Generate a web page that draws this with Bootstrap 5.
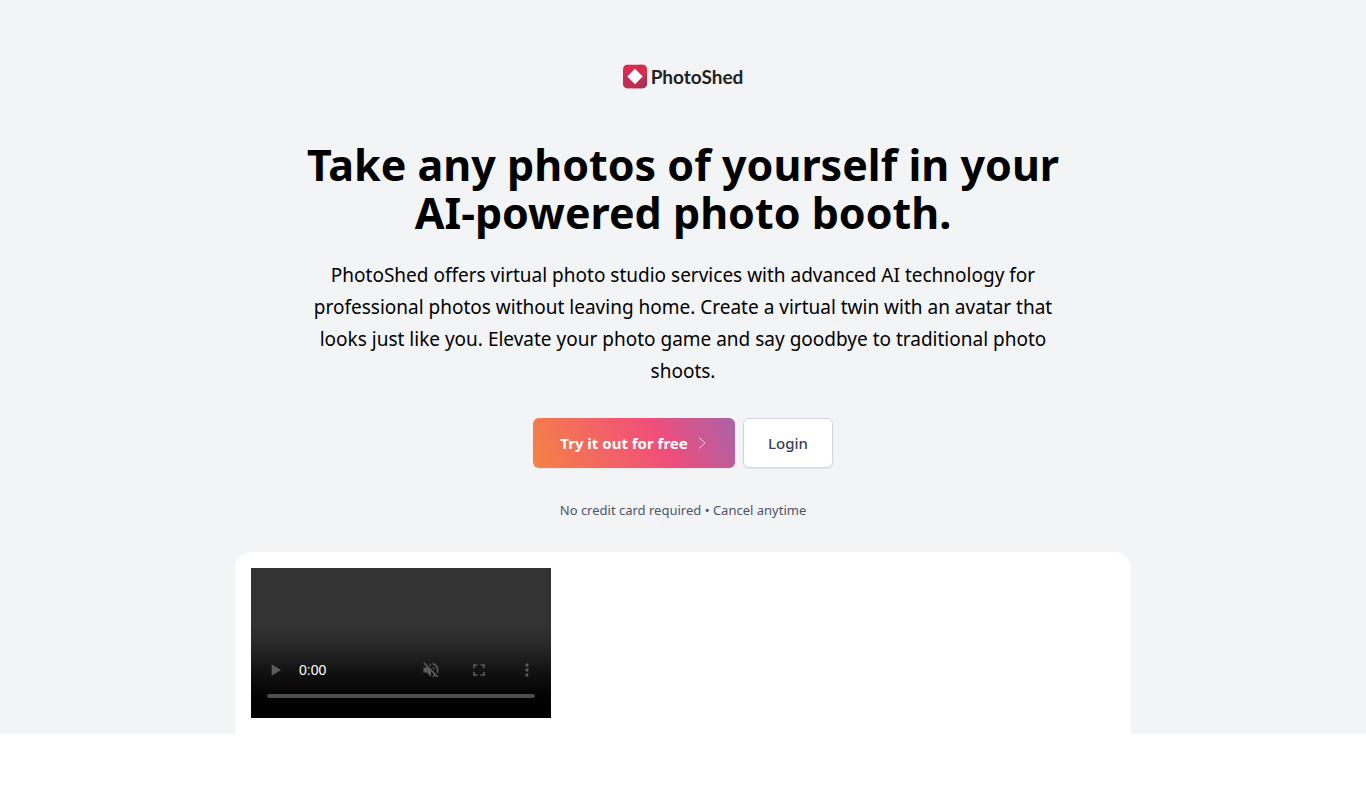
<!DOCTYPE html>
<html lang="en">
<head>
<meta charset="utf-8">
<meta name="viewport" content="width=device-width, initial-scale=1">
<title>PhotoShed</title>
<link href="https://cdn.jsdelivr.net/npm/bootstrap@5.3.0/dist/css/bootstrap.min.css" rel="stylesheet">
<style>
body { font-family: "Noto Sans", "Open Sans", sans-serif; color: #000; background: #fff; }
.hero { background: #f3f4f6; padding-top: 64px; }
.hero-copy { max-width: 768px; }
.brand { color: #1f2223; font: 700 19px/25px Lato, sans-serif; gap: 4px; }
.hero-title { font-size: 43px; line-height: 48px; font-weight: 700; margin: 52px 0 22px; }
.hero-lead { font-size: 19px; line-height: 32px; margin-bottom: 31px; }
.btn-hero { height: 50px; border-radius: 6px; font-size: 15px; line-height: 24px; padding: 0 24px; box-shadow: 0 1px 2px rgba(0,0,0,.06); }
.btn-try { --bs-btn-color: #fff; --bs-btn-hover-color: #fff; --bs-btn-active-color: #fff; border: 0; font-weight: 700; background: linear-gradient(65deg, #f58345 0%, #f04e7b 62%, #a962a8 100%); width: 202px; }
.btn-login { --bs-btn-color: #374151; --bs-btn-bg: #fff; --bs-btn-border-color: #d1d5db; --bs-btn-hover-bg: #f9fafb; --bs-btn-hover-border-color: #d1d5db; --bs-btn-hover-color: #374151; font-weight: 500; width: 90px; padding: 0; }
.hero-note { font-size: 13px; line-height: 20px; color: #4b5563; margin: 32px 0; }
.demo { max-width: 896px; border-radius: 16px 16px 0 0; }
.player { width: 300px; max-width: 100%; height: 150px; background: linear-gradient(#333 0, #333 36%, #2b2b2b 49%, #121212 69%, #030303 85%, #000 100%); }
.player-controls { height: 48px; }
.player-controls .btn { --bs-btn-disabled-color: #5b5b5b; --bs-btn-disabled-opacity: 1; width: 48px; height: 48px; }
.player-time { font: 14px/20px "Liberation Sans", sans-serif; }
.seek { appearance: none; -webkit-appearance: none; display: block; width: calc(100% - 32px); height: 4px; margin: 0 16px 20px; border-radius: 2px; background: #4d4d4d; }
.seek::-webkit-slider-thumb { -webkit-appearance: none; width: 0; height: 0; }
</style>
</head>
<body>
<main class="hero px-3">
  <div class="hero-copy mx-auto text-center">
    <a href="#" class="brand d-inline-flex align-items-center text-decoration-none align-top">
      <svg width="24" height="25" viewBox="0 0 25 25" aria-hidden="true">
        <defs>
          <linearGradient id="tile" x1="0" y1="0" x2="1" y2="1"><stop offset="0" stop-color="#f0284b"/><stop offset="1" stop-color="#93345c"/></linearGradient>
          <linearGradient id="fold" x1="0" y1="0" x2="1" y2="0"><stop offset="0" stop-color="#b52d55"/><stop offset="1" stop-color="#e42a4e"/></linearGradient>
          <clipPath id="tile-shape"><rect width="25" height="25" rx="5"/></clipPath>
        </defs>
        <g clip-path="url(#tile-shape)">
          <path fill="#dd2b50" d="M0 0h25v25H0z"/>
          <path fill="url(#fold)" d="M9 8 17 0h8v13l-4-.5-8.500-8.500z"/>
          <path fill="url(#tile)" d="M21 12.500 25 9v16H10l-2-4z"/>
          <path fill="#c12d54" d="M0 12h4l8.500 8.500L8 25H0z"/>
        </g>
        <path fill="#fff" d="M12.500 4.500 20.500 12.500 12.500 20.500 4.500 12.500z"/>
      </svg>
      <span>PhotoShed</span>
    </a>
    <h1 class="hero-title">Take any photos of yourself in your AI-powered photo booth.</h1>
    <p class="hero-lead">PhotoShed offers virtual photo studio services with advanced AI technology for professional photos without leaving home. Create a virtual twin with an avatar that looks just like you. Elevate your photo game and say goodbye to traditional photo shoots.</p>
    <div class="d-flex flex-wrap justify-content-center gap-2">
      <button type="button" class="btn btn-hero btn-try d-inline-flex align-items-center justify-content-center gap-2">Try it out for free
        <svg width="12" height="12" viewBox="0 0 12 12" fill="none" stroke="#fff" stroke-opacity=".75" aria-hidden="true"><path d="M3 .5 9 6l-6 5.500"/></svg>
      </button>
      <button type="button" class="btn btn-hero btn-login">Login</button>
    </div>
    <p class="hero-note">No credit card required • Cancel anytime</p>
  </div>
  <section class="demo bg-white mx-auto p-3" aria-label="Demo video">
    <div class="player d-flex flex-column justify-content-end">
      <div class="player-controls d-flex align-items-center">
        <button type="button" class="btn p-0 border-0 d-flex align-items-center justify-content-center" aria-label="Play" disabled>
          <svg width="20" height="20" viewBox="0 0 24 24" fill="currentColor"><path d="M8 5v14l11-7z"/></svg>
        </button>
        <span class="player-time text-white">0:00</span>
        <button type="button" class="btn p-0 border-0 ms-auto d-flex align-items-center justify-content-center" aria-label="Unmute" disabled>
          <svg width="20" height="20" viewBox="0 0 24 24" fill="currentColor"><path d="M4.340 2.930 2.930 4.340 7.290 8.700 7 9H3v6h4l5 5v-6.590l4.180 4.180c-.65.49-1.380.88-2.180 1.110v2.060a8.940 8.940 0 0 0 3.610-1.750l2.050 2.050 1.410-1.410zM19 12c0 .82-.15 1.610-.41 2.340l1.530 1.530A8.900 8.900 0 0 0 21 12c0-4.280-2.990-7.860-7-8.770v2.060c2.890.86 5 3.540 5 6.710zM12 4l-1.880 1.880L12 7.760zm4.500 8A4.500 4.500 0 0 0 14 7.970v1.790l2.480 2.480z"/></svg>
        </button>
        <button type="button" class="btn p-0 border-0 d-flex align-items-center justify-content-center" aria-label="Full screen" disabled>
          <svg width="20" height="20" viewBox="0 0 24 24" fill="currentColor"><path d="M7 14H5v5h5v-2H7zm-2-4h2V7h3V5H5zm12 7h-3v2h5v-5h-2zM14 5v2h3v3h2V5z"/></svg>
        </button>
        <button type="button" class="btn p-0 border-0 d-flex align-items-center justify-content-center" aria-label="More options" disabled>
          <svg width="20" height="20" viewBox="0 0 24 24" fill="currentColor"><circle cx="12" cy="6" r="2"/><circle cx="12" cy="12" r="2"/><circle cx="12" cy="18" r="2"/></svg>
        </button>
      </div>
      <input type="range" class="seek" aria-label="Seek" value="0" disabled>
    </div>
  </section>
</main>
<script src="https://cdn.jsdelivr.net/npm/bootstrap@5.3.0/dist/js/bootstrap.bundle.min.js"></script>
</body>
</html>
